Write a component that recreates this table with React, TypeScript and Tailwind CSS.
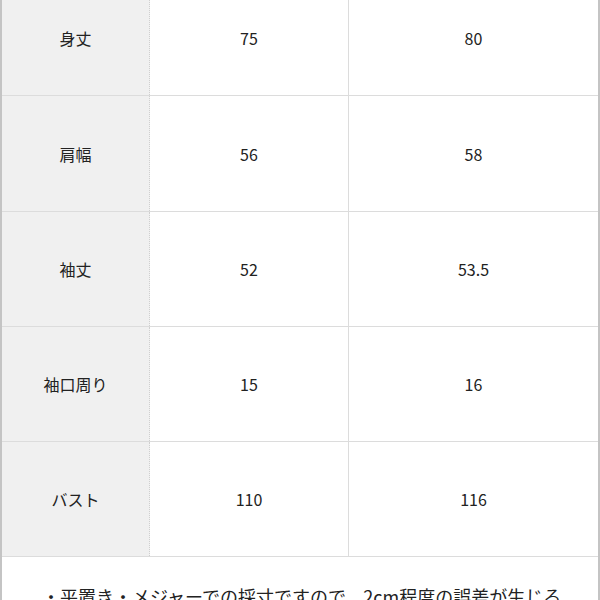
const rows = [
  { label: "身丈", a: "75", b: "80", h: "h-[115px]" },
  { label: "肩幅", a: "56", b: "58", h: "h-[116px]" },
  { label: "袖丈", a: "52", b: "53.5", h: "h-[115px]" },
  { label: "袖口周り", a: "15", b: "16", h: "h-[115px]" },
  { label: "バスト", a: "110", b: "116", h: "h-[115px]" },
];

export default function App() {
  return (
    <div
      className="h-[600px] w-[600px] overflow-hidden bg-white border-x-2 border-[#c4c4c4] text-[#222]"
      style={{ fontFamily: '"Noto Sans CJK JP", "Noto Sans", sans-serif' }}
    >
      <div className="-mt-[19px] flex flex-col">
        {rows.map((r) => (
          <div key={r.label} className={`flex ${r.h} border-b border-[#dcdcdc]`}>
            <div className="flex w-[148px] items-center justify-center bg-[#f0f0f0] border-r border-dotted border-[#cfcfcf] text-[16px]">
              {r.label}
            </div>
            <div className="flex w-[199px] items-center justify-center border-r border-[#dcdcdc] text-[16px]">
              {r.a}
            </div>
            <div className="flex flex-1 items-center justify-center text-[16px]">
              {r.b}
            </div>
          </div>
        ))}
      </div>
      <p className="pl-[40px] pt-[25px] text-[18px] leading-[1.6] whitespace-nowrap">
        ・平置き・メジャーでの採寸ですので、2cm程度の誤差が生じる
      </p>
    </div>
  );
}
